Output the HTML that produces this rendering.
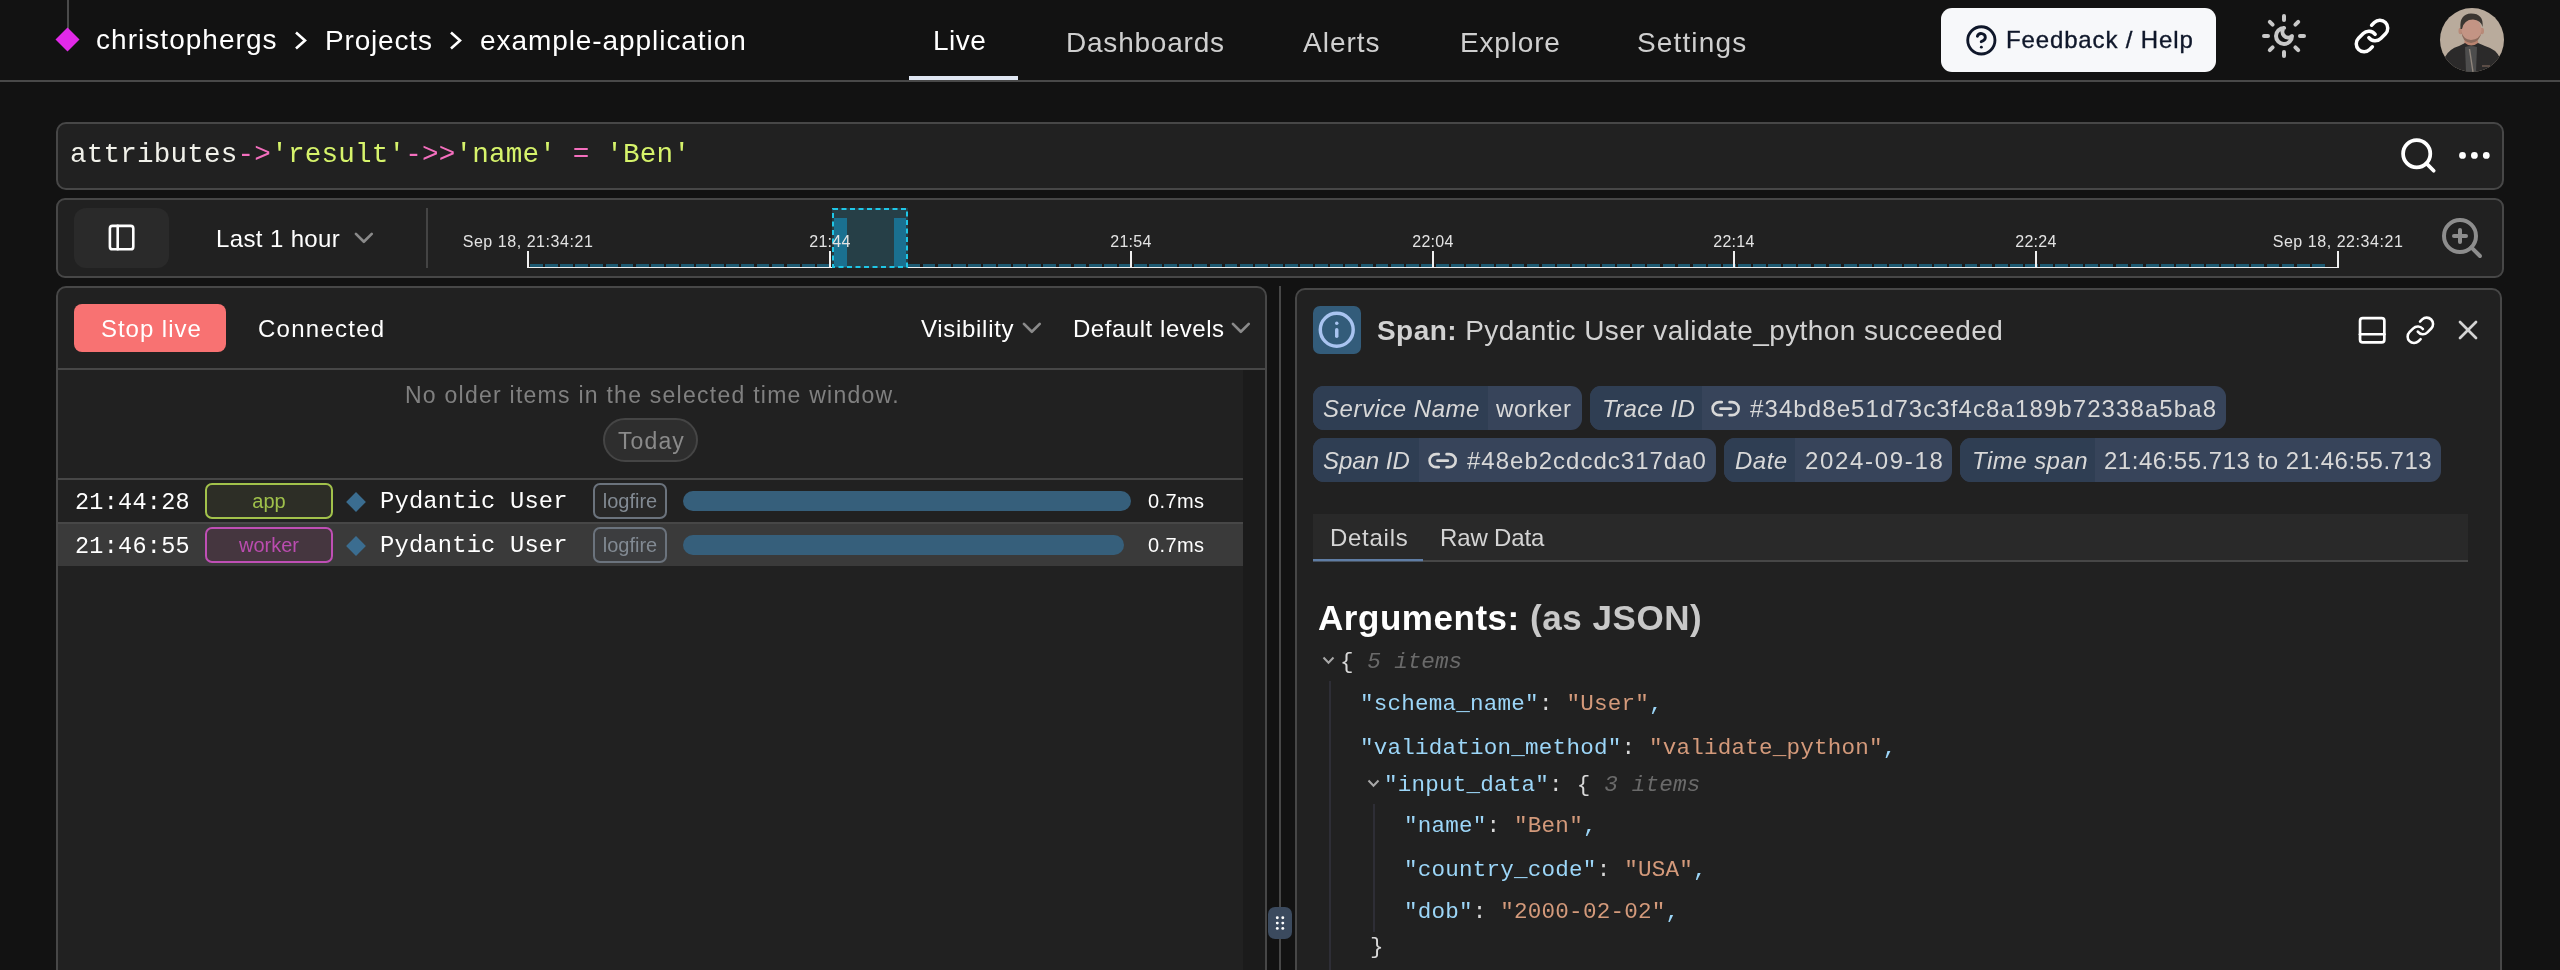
<!DOCTYPE html>
<html><head><meta charset="utf-8">
<style>
*{box-sizing:border-box;margin:0;padding:0}
html,body{width:2560px;height:970px;overflow:hidden;background:#121212;font-family:"Liberation Sans",sans-serif;color:#fff}
.a{position:absolute}
.t{position:absolute;white-space:nowrap;line-height:1;will-change:transform}
.mono{font-family:"Liberation Mono",monospace}
svg{position:absolute;overflow:visible}
</style></head><body>
<!-- HEADER -->
<div class="a" style="left:0;top:0;width:2560px;height:80px;background:#121212"></div>
<div class="a" style="left:0;top:80px;width:2560px;height:2px;background:#494949"></div>
<div class="a" style="left:67px;top:0;width:2px;height:30px;background:#4a4a4a"></div>
<div class="a" style="left:59px;top:31px;width:17px;height:17px;background:#e229e8;transform:rotate(45deg)"></div>
<div class="t" id="bc1" style="letter-spacing:1.04px;left:96px;top:26px;font-size:28px;color:#fff">christophergs</div>
<svg style="left:294px;top:31px" width="14" height="19" viewBox="0 0 14 19"><path d="M2 1.5 L11 9.5 L2 17.5" fill="none" stroke="#fff" stroke-width="2.6"/></svg>
<div class="t" id="bc2" style="letter-spacing:0.83px;left:325px;top:27px;font-size:28px;color:#fff">Projects</div>
<svg style="left:449px;top:31px" width="14" height="19" viewBox="0 0 14 19"><path d="M2 1.5 L11 9.5 L2 17.5" fill="none" stroke="#fff" stroke-width="2.6"/></svg>
<div class="t" id="bc3" style="letter-spacing:0.93px;left:480px;top:27px;font-size:28px;color:#fff">example-application</div>

<div class="t" id="nav1" style="letter-spacing:0.50px;left:933px;top:27px;font-size:28px;color:#fff">Live</div>
<div class="a" style="left:909px;top:76px;width:109px;height:4px;background:#dfe6f2"></div>
<div class="t" id="nav2" style="letter-spacing:0.78px;left:1066px;top:29px;font-size:28px;color:#cfcfcf">Dashboards</div>
<div class="t" id="nav3" style="letter-spacing:1.00px;left:1303px;top:29px;font-size:28px;color:#cfcfcf">Alerts</div>
<div class="t" id="nav4" style="letter-spacing:0.83px;left:1460px;top:29px;font-size:28px;color:#cfcfcf">Explore</div>
<div class="t" id="nav5" style="letter-spacing:1.14px;left:1637px;top:29px;font-size:28px;color:#cfcfcf">Settings</div>

<div class="a" style="left:1941px;top:8px;width:275px;height:64px;background:#f7f8fa;border-radius:11px"></div>
<svg style="left:1964.6px;top:23.5px" width="32.7" height="32.7" viewBox="0 0 24 24" fill="none" stroke="#0f172a" stroke-width="2.1" stroke-linecap="round" stroke-linejoin="round"><circle cx="12" cy="12" r="10"/><path d="M9.09 9a3 3 0 0 1 5.83 1c0 2-3 3-3 3"/><path d="M12 17h.01"/></svg>
<div class="t" id="fb" style="-webkit-text-stroke:0.35px #0f172a;letter-spacing:0.86px;left:2006px;top:28px;font-size:24px;color:#0f172a">Feedback / Help</div>

<svg style="left:2260px;top:12px" width="48" height="48" viewBox="0 0 24 24" fill="none" stroke="#c8c8c8" stroke-width="2" stroke-linecap="round" stroke-linejoin="round"><path d="M12 8a2.83 2.83 0 0 0 4 4 4 4 0 1 1-4-4"/><path d="M12 2v2"/><path d="M12 20v2"/><path d="m4.9 4.9 1.4 1.4"/><path d="m17.7 17.7 1.4 1.4"/><path d="M2 12h2"/><path d="M20 12h2"/><path d="m6.3 17.7-1.4 1.4"/><path d="m19.1 4.9-1.4 1.4"/></svg>
<svg style="left:2353px;top:17px" width="38" height="38" viewBox="0 0 24 24" fill="none" stroke="#fff" stroke-width="2.2" stroke-linecap="round" stroke-linejoin="round"><path d="M10 13a5 5 0 0 0 7.54.54l3-3a5 5 0 0 0-7.07-7.07l-1.72 1.71"/><path d="M14 11a5 5 0 0 0-7.54-.54l-3 3a5 5 0 0 0 7.07 7.07l1.71-1.71"/></svg>
<svg style="left:2440px;top:8px" width="64" height="64" viewBox="0 0 64 64">
<defs><clipPath id="avc"><circle cx="32" cy="32" r="32"/></clipPath></defs>
<g clip-path="url(#avc)">
<rect width="64" height="64" fill="#b9ab9c"/>
<path d="M25 30 Q23 40 27 41 L37 41 Q40 39 37 30 Z" fill="#b98470"/>
<ellipse cx="20.5" cy="23" rx="2" ry="3.2" fill="#b88a78"/>
<ellipse cx="42" cy="23" rx="2" ry="3.2" fill="#b88a78"/>
<ellipse cx="31.5" cy="22" rx="10" ry="12" fill="#c39484"/>
<path d="M21.5 24 Q22 34 31 35 Q40 34 41.5 24 Q40 31 31 32 Q23 31 21.5 24 Z" fill="#8a6a5c"/>
<path d="M20.5 21 Q19 6 31 5.5 Q44 5.5 42.5 19 Q41 12 33 11.5 Q24 11.5 22 21 Z" fill="#3b3631"/>
<path d="M0 64 L5 49 Q9 41 19 38 L25 35 Q31 40 38 35 L45 38 Q56 41 60 50 L64 64 Z" fill="#2b2a2a"/>
<path d="M25 39 Q31 37 37 39 L36 64 L26 64 Z" fill="#4d4d4d"/>
<path d="M29.5 41 L33 64" stroke="#8f857c" stroke-width="1.4"/>
<path d="M42 58 L50 58" stroke="#6d5a50" stroke-width="1.6"/>
</g></svg>
<!-- SEARCH -->
<div class="a" style="left:56px;top:122px;width:2448px;height:68px;background:#212121;border:2px solid #474747;border-radius:10px"></div>
<div class="t mono" id="q" style="left:70px;top:141px;font-size:27.6px;letter-spacing:0.2px;color:#f1f1ea"><span>attributes</span><span style="color:#f46fbe">-&gt;</span><span style="color:#d6f36b">'result'</span><span style="color:#f46fbe">-&gt;&gt;</span><span style="color:#d6f36b">'name'</span> <span style="color:#f46fbe">=</span> <span style="color:#d6f36b">'Ben'</span></div>
<svg style="left:2398px;top:135.4px" width="40.8" height="40.8" viewBox="0 0 24 24" fill="none" stroke="#fff" stroke-width="2.2" stroke-linecap="round" stroke-linejoin="round"><circle cx="11" cy="11" r="8"/><path d="m21 21-4.3-4.3"/></svg>
<svg style="left:2453.6px;top:135.4px" width="40.8" height="40.8" viewBox="0 0 24 24" fill="none" stroke="#fff" stroke-width="2" stroke-linecap="round" stroke-linejoin="round"><circle cx="12" cy="12" r="1"/><circle cx="19" cy="12" r="1"/><circle cx="5" cy="12" r="1"/></svg>

<!-- TIMELINE -->
<div class="a" style="left:56px;top:198px;width:2448px;height:80px;background:#212121;border:2px solid #474747;border-radius:9px"></div>
<div class="a" style="left:74px;top:208px;width:95px;height:60px;background:#2a2a2a;border-radius:12px"></div>
<svg style="left:106.4px;top:222.4px" width="31.2" height="31.2" viewBox="0 0 24 24" fill="none" stroke="#fff" stroke-width="2" stroke-linecap="round" stroke-linejoin="round"><rect width="18" height="18" x="3" y="3" rx="2"/><path d="M9 3v18"/></svg>
<div class="t" id="last" style="letter-spacing:0.37px;left:216px;top:227px;font-size:24px;color:#fff">Last 1 hour</div>
<svg style="left:348.2px;top:222.2px" width="31.7" height="31.7" viewBox="0 0 24 24" fill="none" stroke="#8a8a8a" stroke-width="2" stroke-linecap="round" stroke-linejoin="round"><path d="m6 9 6 6 6-6"/></svg>
<div class="a" style="left:426px;top:208px;width:2px;height:60px;background:#444"></div>

<div id="axis"><div class="a" style="left:530px;top:264px;width:1795px;height:3px;background:repeating-linear-gradient(90deg,#1d5a72 0 12.8px,#1b1b1b 12.8px 15.1px)"></div><div class="a" style="left:528px;top:267px;width:1811px;height:1px;background:#f0f0f0"></div><div class="a" style="left:832px;top:208px;width:76px;height:60px;background:#263f47"></div><div class="a" style="left:834px;top:218px;width:13px;height:49px;background:#1a7090"></div><div class="a" style="left:894px;top:218px;width:12px;height:49px;background:#1a7090"></div><svg style="left:832px;top:208px" width="76" height="60"><rect x="1" y="1" width="74" height="58" fill="none" stroke="#1fc6e6" stroke-width="2" stroke-dasharray="5 3.5"/></svg><div class="a" style="left:527px;top:251px;width:2px;height:17px;background:#f0f0f0"></div><div class="t" style="left:378px;width:300px;text-align:center;top:234px;font-size:16px;letter-spacing:0.55px;color:#e3e3e3">Sep 18, 21:34:21</div><div class="a" style="left:829px;top:251px;width:2px;height:17px;background:#f0f0f0"></div><div class="t" style="left:680px;width:300px;text-align:center;top:234px;font-size:16px;letter-spacing:0.3px;color:#e3e3e3">21:44</div><div class="a" style="left:1130px;top:251px;width:2px;height:17px;background:#f0f0f0"></div><div class="t" style="left:981px;width:300px;text-align:center;top:234px;font-size:16px;letter-spacing:0.3px;color:#e3e3e3">21:54</div><div class="a" style="left:1432px;top:251px;width:2px;height:17px;background:#f0f0f0"></div><div class="t" style="left:1283px;width:300px;text-align:center;top:234px;font-size:16px;letter-spacing:0.3px;color:#e3e3e3">22:04</div><div class="a" style="left:1733px;top:251px;width:2px;height:17px;background:#f0f0f0"></div><div class="t" style="left:1584px;width:300px;text-align:center;top:234px;font-size:16px;letter-spacing:0.3px;color:#e3e3e3">22:14</div><div class="a" style="left:2035px;top:251px;width:2px;height:17px;background:#f0f0f0"></div><div class="t" style="left:1886px;width:300px;text-align:center;top:234px;font-size:16px;letter-spacing:0.3px;color:#e3e3e3">22:24</div><div class="a" style="left:2337px;top:251px;width:2px;height:17px;background:#f0f0f0"></div><div class="t" style="left:2188px;width:300px;text-align:center;top:234px;font-size:16px;letter-spacing:0.55px;color:#e3e3e3">Sep 18, 22:34:21</div></div>
<svg style="left:2438px;top:213.6px" width="48" height="48" viewBox="0 0 24 24" fill="none" stroke="#8d8d8d" stroke-width="2" stroke-linecap="round" stroke-linejoin="round"><circle cx="11" cy="11" r="8"/><line x1="21" x2="16.65" y1="21" y2="16.65"/><line x1="11" x2="11" y1="8" y2="14"/><line x1="8" x2="14" y1="11" y2="11"/></svg>


<!-- LEFT PANEL -->
<div class="a" style="left:56px;top:286px;width:1211px;height:720px;background:#212121;border:2px solid #474747;border-radius:10px"></div>
<div class="a" style="left:74px;top:304px;width:152px;height:48px;background:#f87272;border-radius:8px"></div>
<div class="t" id="stop" style="letter-spacing:0.96px;left:101px;top:317px;font-size:24px;color:#fff">Stop live</div>
<div class="t" id="conn" style="letter-spacing:1.25px;left:258px;top:317px;font-size:24px;color:#fff">Connected</div>
<div class="t" id="vis" style="letter-spacing:0.70px;left:921px;top:317px;font-size:24px;color:#fff">Visibility</div>
<svg style="left:1016.1px;top:312.1px" width="31.7" height="31.7" viewBox="0 0 24 24" fill="none" stroke="#8a8a8a" stroke-width="2" stroke-linecap="round" stroke-linejoin="round"><path d="m6 9 6 6 6-6"/></svg>
<div class="t" id="lev" style="letter-spacing:0.54px;left:1073px;top:317px;font-size:24px;color:#fff">Default levels</div>
<svg style="left:1225.1px;top:312.1px" width="31.7" height="31.7" viewBox="0 0 24 24" fill="none" stroke="#8a8a8a" stroke-width="2" stroke-linecap="round" stroke-linejoin="round"><path d="m6 9 6 6 6-6"/></svg>
<div class="a" style="left:58px;top:368px;width:1207px;height:2px;background:#474747"></div>
<div class="a" style="left:1243px;top:370px;width:22px;height:600px;background:#1b1b1b"></div>
<div class="t" id="noold" style="letter-spacing:1.25px;left:405px;top:384px;font-size:23px;color:#808080">No older items in the selected time window.</div>
<div class="a" style="left:603px;top:418px;width:95px;height:44px;background:#2e2e2e;border:2px solid #454545;border-radius:22px"></div>
<div class="t" id="today" style="letter-spacing:1.10px;left:618px;top:430px;font-size:23px;color:#8a8a8a">Today</div>
<div class="a" style="left:58px;top:478px;width:1185px;height:2px;background:#474747"></div>
<!-- row1 -->
<div class="t mono" id="time1" style="letter-spacing:0.27px;left:75px;top:491px;font-size:23.5px;color:#fff">21:44:28</div>
<div class="a" style="left:205px;top:483px;width:128px;height:36px;background:#2d2e26;border:2px solid #a2c24b;border-radius:7px"></div>
<div class="t" id="app" style="left:205px;width:128px;text-align:center;top:491px;font-size:20px;color:#9fc04b">app</div>
<div class="a" style="left:349px;top:495px;width:14px;height:14px;background:#3b6d90;transform:rotate(45deg)"></div>
<div class="t mono" id="pu1" style="letter-spacing:0.19px;left:380px;top:490px;font-size:23.75px;color:#fff">Pydantic User</div>
<div class="a" style="left:593px;top:483px;width:74px;height:36px;background:#282828;border:2px solid #6b737d;border-radius:7px"></div>
<div class="t" id="lf1" style="left:593px;width:74px;text-align:center;top:491px;font-size:20px;color:#828a93">logfire</div>
<div class="a" style="left:683px;top:491px;width:448px;height:20px;background:#365f7b;border-radius:10px"></div>
<div class="t" id="ms1" style="letter-spacing:0.40px;left:1148px;top:491px;font-size:20px;color:#fff">0.7ms</div>
<!-- row2 -->
<div class="a" style="left:58px;top:522px;width:1185px;height:2px;background:#474747"></div>
<div class="a" style="left:58px;top:524px;width:1185px;height:42px;background:#3a3a3a"></div>
<div class="t mono" id="time2" style="letter-spacing:0.27px;left:75px;top:535px;font-size:23.5px;color:#fff">21:46:55</div>
<div class="a" style="left:205px;top:527px;width:128px;height:36px;background:#45363f;border:2px solid #bf4fb5;border-radius:7px"></div>
<div class="t" id="worker" style="left:205px;width:128px;text-align:center;top:535px;font-size:20px;color:#ba4caf">worker</div>
<div class="a" style="left:349px;top:539px;width:14px;height:14px;background:#3b6d90;transform:rotate(45deg)"></div>
<div class="t mono" id="pu2" style="letter-spacing:0.19px;left:380px;top:534px;font-size:23.75px;color:#fff">Pydantic User</div>
<div class="a" style="left:593px;top:527px;width:74px;height:36px;background:#3c3d3f;border:2px solid #6b737d;border-radius:7px"></div>
<div class="t" id="lf2" style="left:593px;width:74px;text-align:center;top:535px;font-size:20px;color:#828a93">logfire</div>
<div class="a" style="left:683px;top:535px;width:441px;height:20px;background:#365f7b;border-radius:10px"></div>
<div class="t" id="ms2" style="letter-spacing:0.40px;left:1148px;top:535px;font-size:20px;color:#fff">0.7ms</div>

<!-- SPLITTER -->
<div class="a" style="left:1279px;top:286px;width:2px;height:684px;background:#474747"></div>
<div class="a" style="left:1268px;top:907px;width:24px;height:32px;background:#3b4a5e;border-radius:7px"></div>
<svg style="left:1268px;top:907px" width="24" height="32"><g fill="#fff"><circle cx="9.3" cy="10.8" r="1.45"/><circle cx="14.8" cy="10.8" r="1.45"/><circle cx="9.3" cy="16.1" r="1.45"/><circle cx="14.8" cy="16.1" r="1.45"/><circle cx="9.3" cy="21.4" r="1.45"/><circle cx="14.8" cy="21.4" r="1.45"/></g></svg>


<!-- RIGHT PANEL -->
<div class="a" style="left:1295px;top:288px;width:1207px;height:720px;background:#212121;border:2px solid #474747;border-radius:10px"></div>
<div class="a" style="left:1313px;top:306px;width:48px;height:48px;background:#335c7a;border-radius:7px"></div>
<svg style="left:1317.2px;top:310.2px" width="39.5" height="39.5" viewBox="0 0 24 24" fill="none" stroke="#a9c4f0" stroke-width="2.1" stroke-linecap="round" stroke-linejoin="round"><circle cx="12" cy="12" r="10"/><path d="M12 16v-4"/><path d="M12 8h.01"/></svg>
<div class="t" id="span" style="letter-spacing:0.43px;left:1377px;top:317px;font-size:28px;color:#d2d2d2"><b>Span:</b> Pydantic User validate_python succeeded</div>
<svg style="left:2355.9px;top:313.8px" width="32.4" height="32.4" viewBox="0 0 24 24" fill="none" stroke="#fff" stroke-width="2" stroke-linecap="round" stroke-linejoin="round"><rect width="18" height="18" x="3" y="3" rx="2"/><path d="M3 15h18"/></svg>
<svg style="left:2404.6px;top:314.6px" width="30.7" height="30.7" viewBox="0 0 24 24" fill="none" stroke="#fff" stroke-width="2" stroke-linecap="round" stroke-linejoin="round"><path d="M10 13a5 5 0 0 0 7.54.54l3-3a5 5 0 0 0-7.07-7.07l-1.72 1.71"/><path d="M14 11a5 5 0 0 0-7.54-.54l-3 3a5 5 0 0 0 7.07 7.07l1.71-1.71"/></svg>
<svg style="left:2452px;top:314px" width="32" height="32" viewBox="0 0 24 24" fill="none" stroke="#d4d4d4" stroke-width="2" stroke-linecap="round" stroke-linejoin="round"><path d="M18 6 6 18"/><path d="m6 6 12 12"/></svg>
<div class="a" style="left:1313px;top:386px;width:269px;height:44px;background:#37445a;border-radius:11px;overflow:hidden"><div class="a" style="left:0;top:0;width:175px;height:44px;background:#2f3e53"></div></div><div class="t" id="b0" style="letter-spacing:0.52px;left:1323px;top:397px;font-size:24px;font-style:italic;color:#d8d8d8">Service Name</div><div class="t" id="b1" style="letter-spacing:0.60px;left:1496px;top:397px;font-size:24px;color:#d8d8d8">worker</div><div class="a" style="left:1590px;top:386px;width:636px;height:44px;background:#37445a;border-radius:11px;overflow:hidden"><div class="a" style="left:0;top:0;width:112px;height:44px;background:#2f3e53"></div></div><div class="t" id="b2" style="letter-spacing:0.37px;left:1602px;top:397px;font-size:24px;font-style:italic;color:#d8d8d8">Trace ID</div><svg style="left:1710.35px;top:392.65px" width="31.3" height="31.3" viewBox="0 0 24 24" fill="none" stroke="#d8d8d8" stroke-width="2" stroke-linecap="round" stroke-linejoin="round"><path d="M9 17H7A5 5 0 0 1 7 7h2"/><path d="M15 7h2a5 5 0 1 1 0 10h-2"/><line x1="8" x2="16" y1="12" y2="12"/></svg><div class="t" id="b3" style="letter-spacing:1.09px;left:1750px;top:397px;font-size:24px;color:#d8d8d8">#34bd8e51d73c3f4c8a189b72338a5ba8</div><div class="a" style="left:1313px;top:438px;width:403px;height:44px;background:#37445a;border-radius:11px;overflow:hidden"><div class="a" style="left:0;top:0;width:106px;height:44px;background:#2f3e53"></div></div><div class="t" id="b4" style="left:1323px;top:449px;font-size:24px;font-style:italic;color:#d8d8d8">Span ID</div><svg style="left:1427.35px;top:444.65px" width="31.3" height="31.3" viewBox="0 0 24 24" fill="none" stroke="#d8d8d8" stroke-width="2" stroke-linecap="round" stroke-linejoin="round"><path d="M9 17H7A5 5 0 0 1 7 7h2"/><path d="M15 7h2a5 5 0 1 1 0 10h-2"/><line x1="8" x2="16" y1="12" y2="12"/></svg><div class="t" id="b5" style="letter-spacing:1.00px;left:1467px;top:449px;font-size:24px;color:#d8d8d8">#48eb2cdcdc317da0</div><div class="a" style="left:1724px;top:438px;width:228px;height:44px;background:#37445a;border-radius:11px;overflow:hidden"><div class="a" style="left:0;top:0;width:71px;height:44px;background:#2f3e53"></div></div><div class="t" id="b6" style="letter-spacing:0.50px;left:1735px;top:449px;font-size:24px;font-style:italic;color:#d8d8d8">Date</div><div class="t" id="b7" style="letter-spacing:1.67px;left:1805px;top:449px;font-size:24px;color:#d8d8d8">2024-09-18</div><div class="a" style="left:1960px;top:438px;width:481px;height:44px;background:#37445a;border-radius:11px;overflow:hidden"><div class="a" style="left:0;top:0;width:135px;height:44px;background:#2f3e53"></div></div><div class="t" id="b8" style="letter-spacing:0.47px;left:1972px;top:449px;font-size:24px;font-style:italic;color:#d8d8d8">Time span</div><div class="t" id="b9" style="letter-spacing:0.52px;left:2104px;top:449px;font-size:24px;color:#d8d8d8">21:46:55.713 to 21:46:55.713</div>
<div class="a" style="left:1313px;top:514px;width:1155px;height:46px;background:#292929"></div>
<div class="a" style="left:1313px;top:560px;width:1155px;height:2px;background:#474747"></div>
<div class="a" style="left:1313px;top:559px;width:110px;height:3px;background:linear-gradient(#5f7da5 0 2px,#475260 2px)"></div>
<div class="t" id="det" style="letter-spacing:0.72px;left:1330px;top:526px;font-size:24px;color:#d4d4d4">Details</div>
<div class="t" id="raw" style="letter-spacing:-0.14px;left:1440px;top:526px;font-size:24px;color:#d4d4d4">Raw Data</div>

<div class="t" id="args" style="letter-spacing:0.54px;left:1318px;top:600px;font-size:35px;font-weight:bold;color:#fff">Arguments: <span style="color:#c8c8c8">(as JSON)</span></div>
<div class="a" style="left:1329px;top:681px;width:2px;height:289px;background:#2e2e36"></div>
<div class="a" style="left:1373px;top:804px;width:2px;height:128px;background:#2e2e36"></div>
<svg style="left:1322px;top:656px" width="13" height="9" viewBox="0 0 13 9"><path d="M1.5 1.5 L6.5 6.8 L11.5 1.5" fill="none" stroke="#a8a8a8" stroke-width="2"/></svg>
<svg style="left:1367px;top:779px" width="13" height="9" viewBox="0 0 13 9"><path d="M1.5 1.5 L6.5 6.8 L11.5 1.5" fill="none" stroke="#a8a8a8" stroke-width="2"/></svg>
<div class="t mono" id="j1" style="left:1340px;top:651px;font-size:22.6px;color:#d8d8d8"><span style="color:#d8d8d8">{</span><span style="color:#d8d8d8"> </span><span style="color:#6a6a6a"><i>5 items</i></span></div><div class="t mono" id="j2" style="letter-spacing:0.2px;left:1360px;top:693px;font-size:22.6px;color:#d8d8d8"><span style="color:#9cd6f8">"schema_name"</span><span style="color:#d8d8d8">: </span><span style="color:#d49a7b">"User"</span><span style="color:#9cd6f8">,</span></div><div class="t mono" id="j3" style="letter-spacing:0.2px;left:1360px;top:737px;font-size:22.6px;color:#d8d8d8"><span style="color:#9cd6f8">"validation_method"</span><span style="color:#d8d8d8">: </span><span style="color:#d49a7b">"validate_python"</span><span style="color:#9cd6f8">,</span></div><div class="t mono" id="j4" style="letter-spacing:0.2px;left:1384px;top:774px;font-size:22.6px;color:#d8d8d8"><span style="color:#9cd6f8">"input_data"</span><span style="color:#d8d8d8">: </span><span style="color:#d8d8d8">{</span><span style="color:#d8d8d8"> </span><span style="color:#6a6a6a"><i>3 items</i></span></div><div class="t mono" id="j5" style="letter-spacing:0.2px;left:1404px;top:815px;font-size:22.6px;color:#d8d8d8"><span style="color:#9cd6f8">"name"</span><span style="color:#d8d8d8">: </span><span style="color:#d49a7b">"Ben"</span><span style="color:#9cd6f8">,</span></div><div class="t mono" id="j6" style="letter-spacing:0.2px;left:1404px;top:859px;font-size:22.6px;color:#d8d8d8"><span style="color:#9cd6f8">"country_code"</span><span style="color:#d8d8d8">: </span><span style="color:#d49a7b">"USA"</span><span style="color:#9cd6f8">,</span></div><div class="t mono" id="j7" style="letter-spacing:0.2px;left:1404px;top:901px;font-size:22.6px;color:#d8d8d8"><span style="color:#9cd6f8">"dob"</span><span style="color:#d8d8d8">: </span><span style="color:#d49a7b">"2000-02-02"</span><span style="color:#9cd6f8">,</span></div><div class="t mono" id="j8" style="left:1370px;top:936px;font-size:22.6px;color:#d8d8d8"><span style="color:#d8d8d8">}</span></div>
</body></html>
